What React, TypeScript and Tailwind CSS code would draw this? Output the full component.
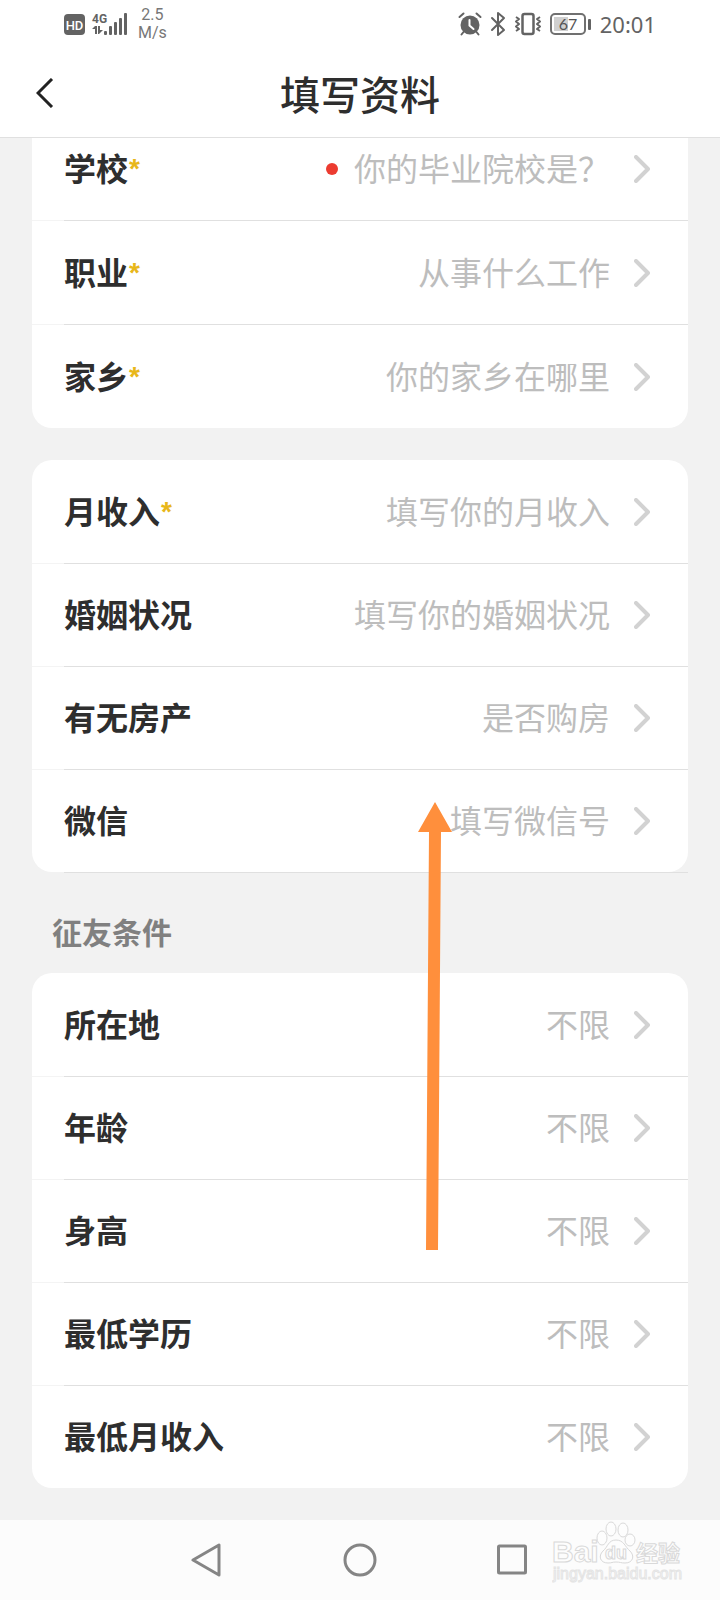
import React from 'react';

type Field = {
  label: string;
  value: string;
  required?: boolean;
  unread?: boolean;
};

const basicFields: Field[] = [
  { label: '学校', value: '你的毕业院校是？', required: true, unread: true },
  { label: '职业', value: '从事什么工作', required: true },
  { label: '家乡', value: '你的家乡在哪里', required: true },
];

const detailFields: Field[] = [
  { label: '月收入', value: '填写你的月收入', required: true },
  { label: '婚姻状况', value: '填写你的婚姻状况' },
  { label: '有无房产', value: '是否购房' },
  { label: '微信', value: '填写微信号' },
];

const matchFields: Field[] = [
  { label: '所在地', value: '不限' },
  { label: '年龄', value: '不限' },
  { label: '身高', value: '不限' },
  { label: '最低学历', value: '不限' },
  { label: '最低月收入', value: '不限' },
];

const SignalIcons = () => (
  <svg width="64" height="24" viewBox="0 0 64 24" fill="#636363">
    <rect x="0" y="2" width="21" height="21" rx="4" />
    <text x="10.500" y="17.500" textAnchor="middle" fill="#fff" fontSize="13" fontWeight="500" fontFamily="Roboto, sans-serif">HD</text>
    <text x="28" y="11" fontSize="12" fontWeight="700" fontFamily="Roboto, sans-serif">4G</text>
    <path d="M28 17l3-3h2v8h-2v-5zM34 14h2v4h3l-4 4h-1z" />
    <rect x="40" y="19" width="3" height="4" rx="1" />
    <rect x="45" y="14" width="3" height="9" rx="1" />
    <rect x="50" y="10" width="3" height="13" rx="1" />
    <rect x="55" y="6" width="3" height="17" rx="1" />
    <rect x="60" y="1" width="3" height="22" rx="1" />
  </svg>
);

const AlarmIcon = () => (
  <svg width="24" height="24" viewBox="0 0 24 24" fill="none" stroke="#636363" strokeLinecap="round">
    <circle cx="12" cy="13" r="9.500" fill="#636363" stroke="none" />
    <path d="M1.500 5l4-3.500M22.500 5l-4-3.500M5.500 20l-2 2.500M18.500 20l2 2.500" strokeWidth="2" />
    <path d="M11.500 8v5.500l4 3.500" stroke="#fff" strokeWidth="2" />
  </svg>
);

const BluetoothIcon = () => (
  <svg width="16" height="26" viewBox="0 0 16 26" fill="none" stroke="#636363" strokeWidth="2" strokeLinejoin="round" strokeLinecap="round">
    <path d="M2 7l12 12-6 5V2l6 5L2 19" />
  </svg>
);

const VibrateIcon = () => (
  <svg width="28" height="24" viewBox="0 0 28 24" fill="none" stroke="#636363" strokeWidth="2" strokeLinejoin="round">
    <rect x="8.500" y="2" width="11" height="20" rx="2" strokeWidth="2.500" />
    <path d="M2 5l3 2-3 2.500 3 2.500-3 2.500 3 2.500-3 2M26 5l-3 2 3 2.500-3 2.500 3 2.500-3 2.500 3 2" />
  </svg>
);

const BatteryIcon = () => (
  <svg width="42" height="22" viewBox="0 0 42 22">
    <rect x="1" y="1" width="34" height="20" rx="4" fill="#fff" stroke="#707070" strokeWidth="2" />
    <path d="M4 4h14v14H4z" fill="#d0d0d0" />
    <rect x="38" y="6" width="3" height="11" rx="1" fill="#636363" />
    <text x="18" y="17" textAnchor="middle" fontSize="16" fontFamily="Lato, sans-serif" fill="#555">67</text>
  </svg>
);

const ChevronIcon = () => (
  <svg width="16" height="28" viewBox="0 0 16 28" fill="none" stroke="#d2d2d2" strokeWidth="4" strokeLinecap="round" strokeLinejoin="round">
    <path d="M2 2l12 12L2 26" />
  </svg>
);

const Watermark = () => (
  <svg width="136" height="68" viewBox="0 0 136 68" fill="#fdfdfd" stroke="#d9d9d9" strokeWidth="1">
    <text x="0" y="42" fontSize="30" fontWeight="700" fontFamily="Liberation Sans, sans-serif">Bai</text>
    <ellipse cx="50" cy="18" rx="5" ry="7" />
    <ellipse cx="59" cy="9" rx="5" ry="7" />
    <ellipse cx="71" cy="10" rx="5" ry="7" />
    <ellipse cx="78" cy="20" rx="5" ry="6" />
    <path d="M64 20c-8 0-8 7-13 11-5 5-3 12 5 12 4 0 4-1 8-1s5 1 9 1c8 0 10-7 5-12-5-4-6-11-14-11z" />
    <text x="53" y="39" fontSize="18" fontWeight="700" fontFamily="Liberation Sans, sans-serif">du</text>
    <text x="84" y="41" fontSize="22" fontWeight="700" fontFamily="Noto Sans CJK SC, sans-serif">经验</text>
    <text x="1" y="59" fontSize="16" stroke="#e4e4e4" fontFamily="Liberation Sans, sans-serif">jingyan.baidu.com</text>
  </svg>
);

const Row: React.FC<{ field: Field }> = ({ field }) => (
  <button type="button" className="flex w-full flex-1 items-center px-8 text-left text-[32px] leading-10">
    <span className="pb-1 font-bold text-[#2e2e2e]">{field.label}</span>
    {field.required && (
      <span className="pl-px font-['Liberation_Sans',sans-serif] text-[28px] font-bold text-[#e8b71a]">*</span>
    )}
    <span className="ml-auto flex items-center gap-4 text-[#bdbdbd]">
      {field.unread && <span className="size-3 rounded-full bg-[#ec3b30]" />}
      <span className="pb-1">{field.value}</span>
    </span>
    <span className="pr-[6px] pl-6">
      <ChevronIcon />
    </span>
  </button>
);

const Divider = () => (
  <div className="flex h-px">
    <div className="w-8 bg-[#f4f4f4]" />
    <div className="flex-1 bg-[#e0e0e0]" />
  </div>
);

const FieldCard: React.FC<{ fields: Field[] }> = ({ fields }) => (
  <div className="rounded-[20px] bg-white">
    {fields.map((field, i) => (
      <div key={field.label} className="flex h-[103px] flex-col">
        {i > 0 && <Divider />}
        <Row field={field} />
      </div>
    ))}
  </div>
);

export default function App() {
  return (
    <div className="flex min-h-screen flex-col bg-[#f2f2f2] font-['Noto_Sans_CJK_SC',sans-serif]">
      <header className="border-b border-[#e0e0e0] bg-white">
        <div className="flex h-12 items-center justify-between px-16 text-[#636363]">
          <div className="flex items-center gap-[10px]">
            <SignalIcons />
            <div className="text-center font-[Roboto,sans-serif] text-base leading-[18px] text-[#777]">
              <div>2.5</div>
              <div>M/s</div>
            </div>
          </div>
          <div className="flex items-center gap-2">
            <AlarmIcon />
            <BluetoothIcon />
            <VibrateIcon />
            <BatteryIcon />
            <span className="font-['Noto_Sans',sans-serif] text-[22px] leading-6">20:01</span>
          </div>
        </div>
        <div className="grid h-[89px] grid-cols-[64px_1fr_64px] items-center">
          <button type="button" aria-label="返回" className="flex justify-end pr-[10px]">
            <svg width="18" height="30" viewBox="0 0 18 30" fill="none" stroke="#222" strokeWidth="3">
              <path d="M16 1L2 15l14 14" />
            </svg>
          </button>
          <h1 className="text-center text-[40px] leading-12 font-medium text-[#2e2e2e]">填写资料</h1>
        </div>
      </header>

      <main className="relative flex-1 px-8 pb-8">
        {/* first card is scrolled partly under the header */}
        <div className="rounded-b-[20px] bg-white">
          {basicFields.map((field, i) => (
            <div key={field.label} className={i === 0 ? 'flex h-[82px] flex-col pb-5' : 'flex h-[104px] flex-col'}>
              {i > 0 && <Divider />}
              <Row field={field} />
            </div>
          ))}
        </div>

        <div className="mt-8">
          <FieldCard fields={detailFields} />
          <div className="ml-8 h-px bg-[#e0e0e0]" />
        </div>

        <h2 className="px-5 pt-10 pb-6 text-[30px] leading-9 font-bold text-[#808080]">征友条件</h2>
        <FieldCard fields={matchFields} />

        <svg className="pointer-events-none absolute top-[664px] left-[416px]" width="38" height="450" viewBox="0 0 38 450" fill="#ff8f3c">
          <path d="M19 0l17 30H25l-3 418H10l3-418H2z" />
        </svg>
      </main>

      <nav className="relative flex h-20 items-center justify-center gap-[121px] bg-[#fcfcfc]">
        <button type="button" aria-label="后退">
          <svg width="32" height="34" viewBox="0 0 32 34" fill="none" stroke="#858585" strokeWidth="3" strokeLinejoin="round">
            <path d="M28 2v30L2 17z" />
          </svg>
        </button>
        <button type="button" aria-label="主页">
          <svg width="32" height="34" viewBox="0 0 32 34" className="overflow-visible" fill="none" stroke="#858585" strokeWidth="3">
            <circle cx="16" cy="17" r="15" />
          </svg>
        </button>
        <button type="button" aria-label="最近任务">
          <svg width="32" height="34" viewBox="0 0 32 34" fill="none" stroke="#858585" strokeWidth="3">
            <rect x="1.500" y="3" width="27" height="27" rx="1" />
          </svg>
        </button>
        <div className="pointer-events-none absolute top-0 right-8">
          <Watermark />
        </div>
      </nav>
    </div>
  );
}
